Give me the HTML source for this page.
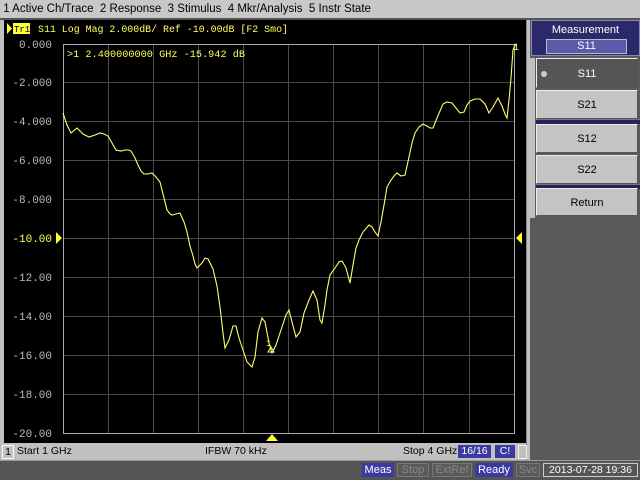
<!DOCTYPE html>
<html><head><style>
html,body{margin:0;width:640px;height:480px;overflow:hidden}
body{background:#c0c0c0;font-family:"Liberation Sans",sans-serif;font-size:11px;position:relative}
.a{position:absolute;white-space:nowrap}
.btn{position:absolute;left:536px;width:102px;background:#c4c4c4;border-top:1px solid #eee;border-left:1px solid #eee;border-right:1px solid #555;border-bottom:1px solid #555;text-align:center;font-size:11px;box-sizing:border-box}
.sep{position:absolute;left:536px;width:104px;height:4px;background:#24245a;border-top:1px solid #777}
.bad{position:absolute;top:463px;height:14px;line-height:14px;font-size:11px;text-align:center;color:#fff;white-space:nowrap;overflow:hidden}
</style></head><body>
<div class="a" style="left:0;top:0;width:640px;height:18px;background:#c8c8c8;font-size:11.5px;line-height:18px">&nbsp;1 Active Ch/Trace &nbsp;2 Response &nbsp;3 Stimulus &nbsp;4 Mkr/Analysis &nbsp;5 Instr State</div>
<div class="a" style="left:0;top:18px;width:640px;height:2px;background:#555"></div>
<div class="a" style="left:0;top:20px;width:530px;height:440px;background:#c0c0c0"></div>
<svg class="a" style="left:4px;top:20px" width="522" height="423" viewBox="4 20 522 423">
<rect x="4" y="20" width="522" height="423" fill="#000"/>
<g stroke="#4a4a4a" stroke-width="1">
<path d="M108.5 44V433M153.5 44V433M198.5 44V433M243.5 44V433M288.5 44V433M333.5 44V433M378.5 44V433M423.5 44V433M469.5 44V433"/>
<path d="M63 82.5H515M63 121.5H515M63 160.5H515M63 199.5H515M63 238.5H515M63 277.5H515M63 316.5H515M63 355.5H515M63 394.5H515"/>
</g>
<rect x="63.5" y="44.5" width="451" height="389" fill="none" stroke="#aaa"/>
<g font-family="Liberation Mono,monospace" font-size="11" fill="#bbb" text-anchor="end">
<text x="52" y="48">0.000</text><text x="52" y="86">-2.000</text><text x="52" y="125">-4.000</text><text x="52" y="164">-6.000</text><text x="52" y="203">-8.000</text><text x="52" y="242" fill="#ffff50">-10.00</text><text x="52" y="281">-12.00</text><text x="52" y="320">-14.00</text><text x="52" y="359">-16.00</text><text x="52" y="398">-18.00</text><text x="52" y="437">-20.00</text>
</g>
<g font-family="Liberation Mono,monospace" font-size="10" fill="#ffff60">
<rect x="13" y="23" width="17" height="11" fill="#ffff40"/><path d="M7 23L12 28.5L7 34Z" fill="#ffff40"/>
<text x="14" y="32" fill="#000" font-size="9">Tr1</text>
<text x="38" y="32" textLength="250" lengthAdjust="spacingAndGlyphs">S11 Log Mag 2.000dB/ Ref -10.00dB [F2 Smo]</text>
<text x="67" y="57" textLength="178" lengthAdjust="spacingAndGlyphs">&gt;1  2.400000000 GHz -15.942 dB</text>
<text x="513" y="50">1</text>
<text x="266" y="346" font-size="9">1</text>
</g>
<path d="M56 232L62 238L56 244Z M522 232L516 238L522 244Z M266 441L272 434L278 441Z" fill="#ffff30"/>
<polyline fill="none" stroke="#ffff70" stroke-width="1.1" points="63,113 67,125 71,133 77,128 83,134 89,137 95,135 100,133 104,134 108,136 112,143 116,150 121,151 125,150 129,150 131,151 135,158 138,165 141,171 144,174 148,174 152,173 156,177 160,182 164,198 167,210 170,214 172,215 176,214 180,213 184,222 187,232 190,246 193,256 195,264 197,268 202,263 205,258 208,259 213,269 217,286 220,307 223,333 225,348 229,340 233,326 236,326 239,338 242,347 247,362 252,367 255,357 258,332 262,318 265,322 269,343 272,353 276,345 281,330 286,315 289,310 292,322 296,337 300,332 304,313 309,300 313,291 317,300 320,320 322,323 325,305 327,290 330,275 335,268 339,262 342,261 346,268 350,283 353,265 356,248 359,240 363,232 369,225 372,227 375,232 378,236 381,222 384,205 387,187 391,180 394,176 397,173 401,176 405,175 409,157 412,143 415,133 419,127 423,124 427,126 430,128 433,128 437,118 440,111 443,104 447,102 452,103 456,108 460,113 464,112 467,105 470,101 475,99 480,99 485,104 489,113 493,107 498,98 502,106 505,114 507,118 509,100 511,78 513,50 515,45 517,45"/>
<path d="M268 352l3-5l3 5z" fill="none" stroke="#ffff70"/>
</svg>
<div class="a" style="left:526px;top:20px;width:4px;height:440px;background:#c0c0c0;border-left:1px solid #888"></div>
<div class="a" style="left:0;top:444px;width:526px;height:15px;background:#c0c0c0;font-size:10.5px;line-height:15px">
<span class="a" style="left:2px;top:1px;width:10px;height:12px;border:1px solid #fff;line-height:12px;text-align:center">1</span>
<span class="a" style="left:17px">Start 1 GHz</span>
<span class="a" style="left:205px">IFBW 70 kHz</span>
<span class="a" style="left:403px">Stop 4 GHz</span>
<span class="a" style="left:458px;top:1px;width:33px;height:13px;background:#3a3aa0;color:#fff;text-align:center;line-height:13px">16/16</span>
<span class="a" style="left:495px;top:1px;width:20px;height:13px;background:#3a3aa0;color:#fff;text-align:center;line-height:13px">C!</span>
<span class="a" style="left:518px;top:1px;width:7px;height:12px;border:1px solid #eee"></span>
</div>
<div class="a" style="left:0;top:460px;width:640px;height:20px;background:#555;border-top:1px solid #999;box-sizing:border-box"></div>
<div class="bad" style="left:362px;width:32px;background:#3a3aa0">Meas</div>
<div class="bad" style="left:397px;width:32px;background:#5a5a5a;color:#888;border:1px solid #777;box-sizing:border-box;line-height:12px">Stop</div>
<div class="bad" style="left:432px;width:40px;background:#5a5a5a;color:#888;border:1px solid #777;box-sizing:border-box;line-height:12px">ExtRef</div>
<div class="bad" style="left:475px;width:38px;background:#3a3aa0">Ready</div>
<div class="bad" style="left:516px;width:24px;background:#5a5a5a;color:#888;border:1px solid #777;box-sizing:border-box;line-height:12px">Svc</div>
<div class="bad" style="left:543px;width:95px;background:#555;border:1px solid #ccc;box-sizing:border-box;line-height:12px;font-size:10.5px">2013-07-28 19:36</div>
<div class="a" style="left:530px;top:20px;width:110px;height:440px;background:#5a5a5a"></div>
<div class="a" style="left:531px;top:20px;width:109px;height:36px;background:#2a2a6a;border:1px solid #8888aa;box-sizing:border-box;color:#fff;text-align:center;font-size:11px;line-height:18px">Measurement
<div style="position:absolute;left:14px;top:18px;width:79px;height:13px;background:#5a5aa8;border:1px solid #bbb;line-height:12px">S11</div></div>
<div class="a" style="left:530px;top:58px;width:5px;height:160px;background:#c0c0c0"></div>
<div class="btn" style="top:58px;height:30px;line-height:30px;background:#555;color:#fff">S11<span style="position:absolute;left:4px;top:12px;width:6px;height:6px;border-radius:3px;background:#ccc"></span></div>
<div class="btn" style="top:90px;height:29px;line-height:29px">S21</div>
<div class="sep" style="top:119px"></div>
<div class="btn" style="top:124px;height:29px;line-height:29px">S12</div>
<div class="btn" style="top:155px;height:29px;line-height:29px">S22</div>
<div class="sep" style="top:184px"></div>
<div class="btn" style="top:188px;height:28px;line-height:28px">Return</div>
</body></html>
